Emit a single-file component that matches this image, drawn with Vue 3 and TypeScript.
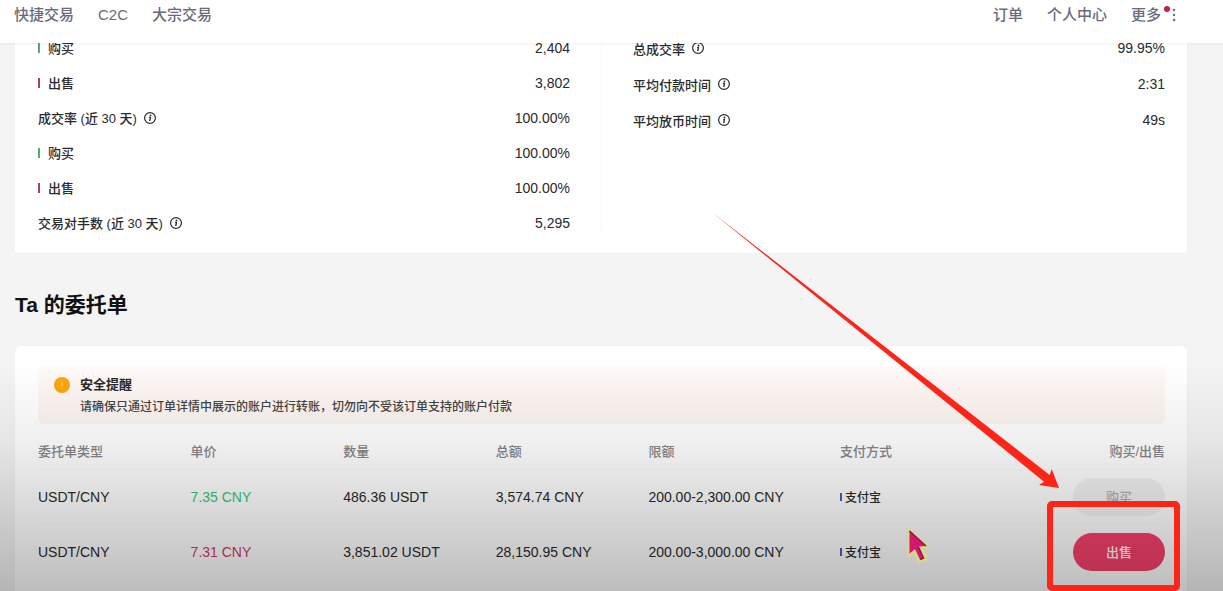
<script setup lang="ts">
interface Stat {
  label: string
  value: string
  side?: 'buy' | 'sell'
  info?: boolean
}

interface Order {
  pair: string
  price: string
  amount: string
  total: string
  limit: string
  payment: string
  side: 'buy' | 'sell'
}

const products: string[] = ['快捷交易', 'C2C', '大宗交易']
const account: string[] = ['订单', '个人中心']

const tradeStats: Stat[] = [
  { label: '购买', value: '2,404', side: 'buy' },
  { label: '出售', value: '3,802', side: 'sell' },
  { label: '成交率 (近 30 天)', value: '100.00%', info: true },
  { label: '购买', value: '100.00%', side: 'buy' },
  { label: '出售', value: '100.00%', side: 'sell' },
  { label: '交易对手数 (近 30 天)', value: '5,295', info: true },
]

const timeStats: Stat[] = [
  { label: '总成交率', value: '99.95%', info: true },
  { label: '平均付款时间', value: '2:31', info: true },
  { label: '平均放币时间', value: '49s', info: true },
]

const groups = [
  { name: 'trade', rows: tradeStats },
  { name: 'time', rows: timeStats },
]

const columns: string[] = ['委托单类型', '单价', '数量', '总额', '限额', '支付方式', '购买/出售']

const orders: Order[] = [
  {
    pair: 'USDT/CNY',
    price: '7.35 CNY',
    amount: '486.36 USDT',
    total: '3,574.74 CNY',
    limit: '200.00-2,300.00 CNY',
    payment: '支付宝',
    side: 'buy',
  },
  {
    pair: 'USDT/CNY',
    price: '7.31 CNY',
    amount: '3,851.02 USDT',
    total: '28,150.95 CNY',
    limit: '200.00-3,000.00 CNY',
    payment: '支付宝',
    side: 'sell',
  },
]
</script>

<template>
  <div class="page">
    <header class="topbar">
      <nav class="nav">
        <a v-for="item in products" :key="item" href="#">{{ item }}</a>
      </nav>
      <nav class="nav">
        <a v-for="item in account" :key="item" href="#">{{ item }}</a>
        <button class="more" type="button">
          更多
          <svg class="more-dots" viewBox="0 0 4 14" aria-hidden="true">
            <circle cx="2" cy="2" r="1.2" />
            <circle cx="2" cy="7" r="1.2" />
            <circle cx="2" cy="12" r="1.2" />
          </svg>
          <span class="badge"></span>
        </button>
      </nav>
    </header>

    <main class="content">
      <section class="card stats">
        <dl v-for="group in groups" :key="group.name" class="group" :class="group.name">
          <div v-for="(row, i) in group.rows" :key="i" class="stat">
            <dt>
              <span v-if="row.side" class="bar" :class="row.side"></span>
              {{ row.label }}
              <svg v-if="row.info" class="info" viewBox="0 0 14 14" aria-hidden="true">
                <circle cx="7" cy="7" r="5.4" fill="none" stroke="currentColor" stroke-width="1.2" />
                <circle cx="7.5" cy="4.4" r="0.9" fill="currentColor" />
                <path d="M6.2 6.4h1.2L6.8 10" fill="none" stroke="currentColor" stroke-width="1.4" />
              </svg>
            </dt>
            <dd>{{ row.value }}</dd>
          </div>
        </dl>
      </section>

      <h2 class="title">Ta 的委托单</h2>

      <section class="card orders">
        <div class="notice">
          <svg class="warn" viewBox="0 0 16 16" aria-hidden="true">
            <circle cx="8" cy="8" r="8" fill="#fba60d" />
            <path d="M8 4.4v4.4M8 10.4v1.2" stroke="#ffd35c" stroke-width="1.4" />
          </svg>
          <div>
            <h3>安全提醒</h3>
            <p>请确保只通过订单详情中展示的账户进行转账，切勿向不受该订单支持的账户付款</p>
          </div>
        </div>

        <table>
          <thead>
            <tr>
              <th v-for="column in columns" :key="column" scope="col">{{ column }}</th>
            </tr>
          </thead>
          <tbody>
            <tr v-for="order in orders" :key="order.price">
              <td>{{ order.pair }}</td>
              <td :class="order.side">{{ order.price }}</td>
              <td>{{ order.amount }}</td>
              <td>{{ order.total }}</td>
              <td>{{ order.limit }}</td>
              <td><span class="payment">{{ order.payment }}</span></td>
              <td>
                <button
                  class="action"
                  :class="order.side"
                  type="button"
                  :disabled="order.side === 'buy'"
                >
                  {{ order.side === 'buy' ? '购买' : '出售' }}
                </button>
              </td>
            </tr>
          </tbody>
        </table>
      </section>
    </main>

    <div class="shade"></div>

    <svg class="marks" width="1223" height="591" viewBox="0 0 1223 591" aria-hidden="true">
      <path
        d="M713 213L1049.7 475L1051.7 469L1059 488L1039 485L1044 481.7Z"
        fill="#fd2418"
      />
      <rect x="1050" y="504" width="127" height="84" rx="2" fill="none" stroke="#fd2418" stroke-width="6" />
      <path
        d="M908 529L929 547L921 548L927 559L919 562L914 552L908 557Z"
        fill="#d3d37c"
        stroke="#d9d88a"
        stroke-width="2"
        stroke-linejoin="round"
      />
      <path d="M909.5 531L926 546L918.5 546.5L923.5 558L920 559.5L915 549L909.5 553.5Z" fill="#d3176f" />
      <path d="M909.5 531L926 546M918.5 547L923.5 558L920 559.5" fill="none" stroke="#8c1745" stroke-width="1.5" />
    </svg>
  </div>
</template>

<style>
body {
  margin: 0;
}
</style>

<style scoped>
.page {
  position: relative;
  display: flex;
  flex-direction: column;
  min-height: 100vh;
  overflow: hidden;
  background: #f4f4f4;
  color: #2a2a2a;
  font-family: "Liberation Sans", "Noto Sans CJK SC", sans-serif;
  font-size: 14px;
  font-weight: 500;
}

.topbar {
  position: relative;
  z-index: 1;
  display: flex;
  justify-content: space-between;
  box-sizing: border-box;
  height: 43px;
  padding: 4px 47px 0 14px;
  background: #fff;
  box-shadow: 0 1px 3px rgba(0, 0, 0, 0.06);
}

.nav {
  display: flex;
  align-items: center;
  gap: 24px;
  height: 22px;
}

.nav a,
.more {
  color: #6a6b7a;
  font: inherit;
  font-size: 15px;
  line-height: 22px;
  text-decoration: none;
}

.more {
  position: relative;
  display: flex;
  align-items: center;
  gap: 11px;
  padding: 0;
  border: 0;
  background: none;
}

.more-dots {
  width: 4px;
  height: 14px;
  fill: currentColor;
}

.badge {
  position: absolute;
  top: 2px;
  right: 6px;
  width: 6px;
  height: 6px;
  border-radius: 50%;
  background: #c51f45;
}

.content {
  display: flex;
  flex: 1;
  flex-direction: column;
  margin: -13px 36px 0 15px;
}

.card {
  border-radius: 6px;
  background: #fff;
  box-shadow: 0 0 4px rgba(0, 0, 0, 0.02);
}

.stats {
  display: grid;
  grid-template-columns: 1fr 1fr;
  padding-bottom: 13px;
  border-radius: 2px;
}

.group {
  margin: 0;
}

.trade {
  padding: 0 31px 0 23px;
}

.time {
  margin-bottom: 12px;
  padding: 0 22px 0 31px;
  border-left: 1px solid #f8f8f8;
}

.stat {
  display: flex;
  align-items: center;
  justify-content: space-between;
  height: 35px;
}

.time .stat {
  height: 36px;
}

.stat dt {
  display: flex;
  align-items: center;
  gap: 6px;
  font-size: 13px;
}

.stat dd {
  margin: 0;
}

.bar {
  width: 2px;
  height: 10px;
  margin-right: 2px;
}

.bar.buy {
  background: #4cae70;
}

.bar.sell {
  background: #a8405c;
}

.info {
  width: 14px;
  height: 14px;
}

.title {
  margin: 36px 0 25px;
  color: #111;
  font-size: 21px;
  font-weight: 700;
  line-height: 32px;
}

.orders {
  flex: 1;
  padding: 20px 22px 0 23px;
  border-radius: 6px 6px 0 0;
}

.notice {
  display: flex;
  gap: 10px;
  padding: 9px 16px 5px;
  border-radius: 6px;
  background: linear-gradient(#fefbfa, #fef6f2 40%, #fcf4f0);
}

.warn {
  flex: none;
  width: 16px;
  height: 16px;
  margin-top: 2px;
}

.notice h3 {
  margin: 0;
  font-size: 13px;
  font-weight: 700;
  line-height: 20px;
}

.notice p {
  margin: 0;
  color: #444;
  font-size: 12px;
  line-height: 24px;
}

table {
  width: 100%;
  margin-top: 9px;
  border-collapse: collapse;
  table-layout: fixed;
}

th,
td {
  box-sizing: border-box;
  width: 13.54%;
  padding: 0;
  text-align: left;
  white-space: nowrap;
}

th:nth-child(5) {
  width: 17%;
}

th:last-child {
  width: auto;
}

th:last-child,
td:last-child {
  text-align: right;
}

th {
  height: 36px;
  color: #85858a;
  font-size: 13px;
  font-weight: 500;
}

td {
  height: 55px;
}

tbody tr {
  border-top: 1px solid #fafafa;
}

td.buy {
  color: #32c873;
}

td.sell {
  color: #d23a66;
}

.payment {
  display: flex;
  align-items: center;
  gap: 3px;
  font-size: 12px;
}

.payment::before {
  width: 2px;
  height: 8px;
  background: #5a55b8;
  content: "";
}

.action {
  width: 92px;
  height: 38px;
  padding: 0;
  border: 0;
  border-radius: 19px;
  font: inherit;
  font-size: 13px;
}

.action.buy {
  background: #f3f3f3;
  color: #b2b2b2;
}

.action.sell {
  background: #f6406a;
  color: #fff;
}

.shade {
  position: absolute;
  right: 0;
  bottom: 0;
  left: 0;
  z-index: 2;
  height: 231px;
  background: linear-gradient(rgba(0, 0, 0, 0), rgba(0, 0, 0, 0.06) 35%, rgba(0, 0, 0, 0.26));
  pointer-events: none;
}

.marks {
  position: absolute;
  top: 0;
  left: 0;
  z-index: 3;
  pointer-events: none;
}
</style>
